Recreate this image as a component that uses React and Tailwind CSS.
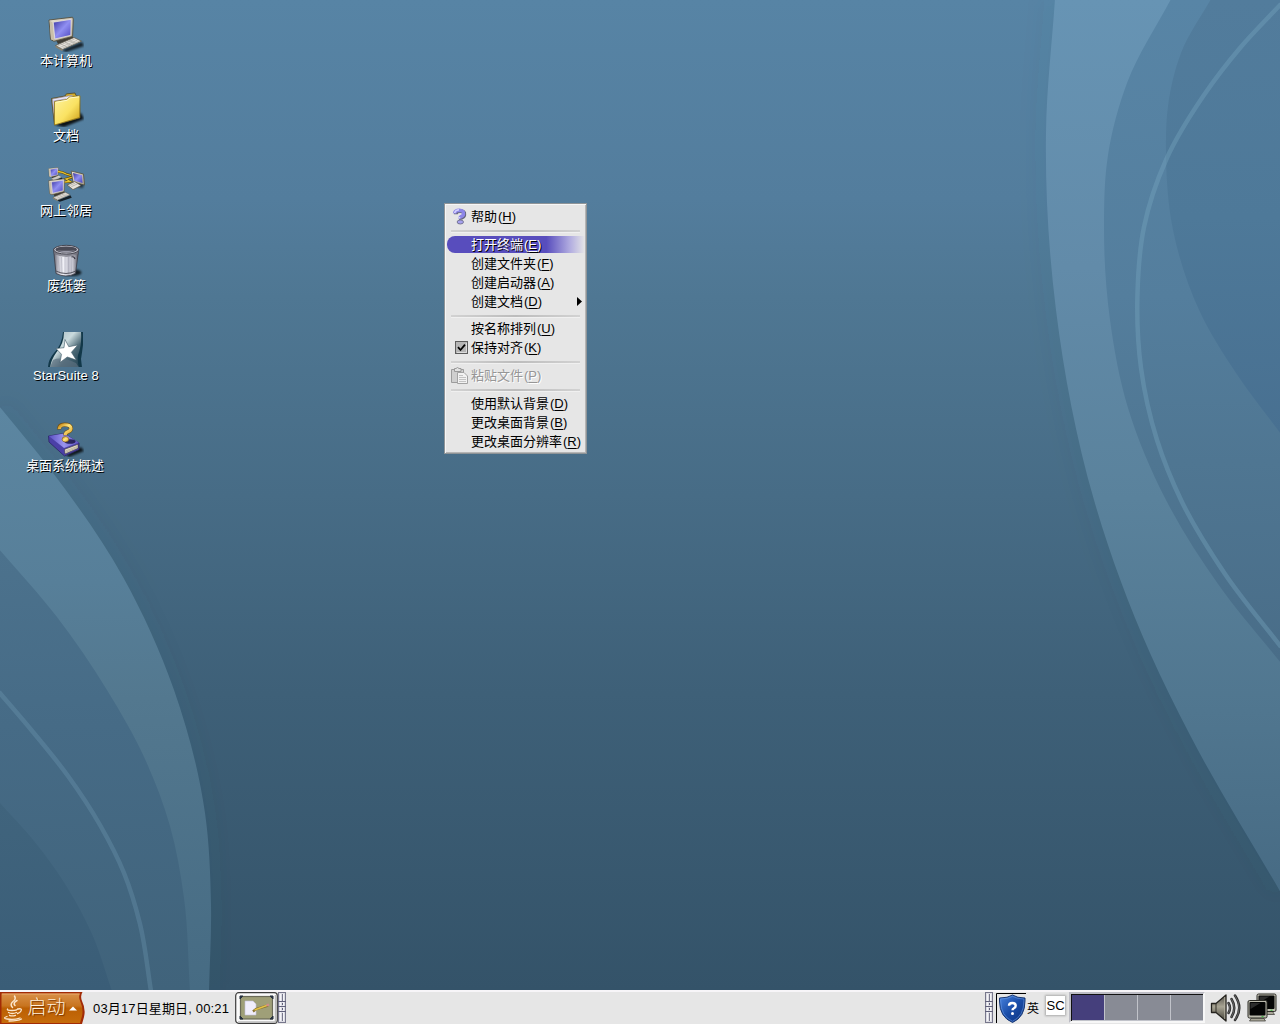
import React from "react";

// Smooth curve through points, with tangents weighted by chord length.
const smooth = (p) => {
  const n = p.length;
  const h = [];
  const v = [];
  for (let i = 0; i < n - 1; i++) {
    const dx = p[i + 1][0] - p[i][0];
    const dy = p[i + 1][1] - p[i][1];
    h[i] = Math.hypot(dx, dy);
    v[i] = [dx / h[i], dy / h[i]];
  }
  const m = p.map((_, i) => {
    if (i === 0) return v[0];
    if (i === n - 1) return v[n - 2];
    const s = h[i - 1] + h[i];
    return [0, 1].map((k) => (v[i - 1][k] * h[i] + v[i][k] * h[i - 1]) / s);
  });
  let d = `M${p[0][0]} ${p[0][1]}`;
  for (let i = 0; i < n - 1; i++) {
    const t = h[i] / 3;
    const b = p[i];
    const c = p[i + 1];
    d += `C${b[0] + m[i][0] * t} ${b[1] + m[i][1] * t} ${c[0] - m[i + 1][0] * t} ${c[1] - m[i + 1][1] * t} ${c[0]} ${c[1]}`;
  }
  return d;
};

const rOuter = [[1055, -1], [1046, 133], [1056, 310], [1094, 500], [1150, 653], [1190, 735], [1281, 893]];
const rMid = [[1171, -1], [1127, 83], [1108, 155], [1104, 227], [1110, 320], [1128, 408], [1166, 500], [1218, 584], [1281, 663]];
const rInner = [[1211, -1], [1181, 53], [1168, 106], [1166, 155], [1173, 230], [1200, 312], [1236, 373], [1281, 434]];
const rLine = [[1281, 4], [1240, 48], [1204, 95], [1166, 160], [1144, 227], [1137.5, 293], [1141, 368], [1157, 440], [1181, 500], [1225, 574], [1281, 647]];
const lOuter = [[-1, 406], [50, 469], [123, 577], [174, 690], [205, 813], [211, 905], [209, 991]];
const lMid = [[-1, 549], [57, 617], [107, 690], [145, 759], [170, 826], [184, 898], [190, 991]];
const lInner = [[-1, 802], [34, 841], [67, 887], [92, 934], [112, 991]];
const lLine = [[-1, 692], [33, 732], [68, 776], [100, 825], [124, 873], [140, 924], [151, 991]];

const Grad = ({ id, y1, y2, stops }) => (
  <linearGradient id={id} gradientUnits="userSpaceOnUse" x1="0" x2="0" y1={y1} y2={y2}>
    {stops.map(([o, c]) => <stop key={o} offset={o} stopColor={c} />)}
  </linearGradient>
);

function Wallpaper() {
  return (
    <svg className="absolute inset-0" width="1280" height="990" viewBox="0 0 1280 990">
      <defs>
        <Grad id="bg" y1="0" y2="990" stops={[[0, "#5784a5"], [0.2, "#537d9d"], [0.3, "#4f7793"], [0.5, "#476c86"], [0.7, "#3e6078"], [1, "#345369"]]} />
        <Grad id="rb" y1="0" y2="890" stops={[[0, "#6794b4"], [0.3, "#628ba9"], [0.56, "#5a829c"], [0.8, "#50768f"], [1, "#476b84"]]} />
        <Grad id="rm" y1="0" y2="660" stops={[[0, "#5885a6"], [0.45, "#547e9d"], [0.7, "#4f7692"], [1, "#496d88"]]} />
        <Grad id="ri" y1="0" y2="433" stops={[[0, "#527c9c"], [0.5, "#4e7999"], [1, "#487091"]]} />
        <Grad id="lb" y1="407" y2="990" stops={[[0, "#5c86a1"], [0.3, "#577f99"], [0.5, "#53788f"], [1, "#466b83"]]} />
        <Grad id="lm" y1="550" y2="990" stops={[[0, "#4c728d"], [0.4, "#466b86"], [1, "#40637b"]]} />
        <Grad id="li" y1="803" y2="990" stops={[[0, "#40647d"], [1, "#3a5d77"]]} />
        <filter id="soft" x="-20%" y="-20%" width="140%" height="140%"><feGaussianBlur stdDeviation="10" /></filter>
      </defs>
      <rect width="1280" height="990" fill="url(#bg)" />
      <path d={smooth(rOuter)} fill="none" stroke="#24475d" strokeOpacity=".035" strokeWidth="22" filter="url(#soft)" />
      <path d={smooth(lOuter)} fill="none" stroke="#24475d" strokeOpacity=".035" strokeWidth="22" filter="url(#soft)" />
      <path d={smooth(rOuter) + "V-1Z"} fill="url(#rb)" />
      <path d={smooth(rMid) + "V-1Z"} fill="url(#rm)" />
      <path d={smooth(rInner) + "V-1Z"} fill="url(#ri)" />
      <path d={smooth(rLine)} fill="none" stroke="#79a9c2" strokeOpacity=".36" strokeWidth="4.5" />
      <path d={smooth(lOuter) + "H-1Z"} fill="url(#lb)" />
      <path d={smooth(lMid) + "H-1Z"} fill="url(#lm)" />
      <path d={smooth(lInner) + "H-1Z"} fill="url(#li)" />
      <path d={smooth(lLine)} fill="none" stroke="#79a5be" strokeOpacity=".28" strokeWidth="4.5" />
    </svg>
  );
}

const IconDefs = () => (
  <svg className="absolute" width="0" height="0">
    <defs>
      <linearGradient id="scr" x1="0" y1="0" x2="1" y2="1"><stop offset="0" stopColor="#3a35a0" /><stop offset=".5" stopColor="#908ff2" /><stop offset="1" stopColor="#4b45bd" /></linearGradient>
      <linearGradient id="bezel" x1="0" y1="0" x2="1" y2="1"><stop offset="0" stopColor="#ece5d6" /><stop offset="1" stopColor="#a79e8b" /></linearGradient>
      <linearGradient id="fold" x1="0" y1="0" x2="1" y2="1"><stop offset="0" stopColor="#fdf3a0" /><stop offset=".55" stopColor="#fae262" /><stop offset="1" stopColor="#c99a12" /></linearGradient>
      <linearGradient id="metal" x1="0" x2="1"><stop offset="0" stopColor="#5d5d69" /><stop offset=".2" stopColor="#c4c4ce" /><stop offset=".4" stopColor="#f2f2f8" /><stop offset=".6" stopColor="#bfbfcb" /><stop offset=".75" stopColor="#ccccd6" /><stop offset="1" stopColor="#4b4b57" /></linearGradient>
      <linearGradient id="star" x1="0" x2="1" y2="1"><stop offset="0" stopColor="#9fb4bd" /><stop offset=".4" stopColor="#c9dadd" /><stop offset=".65" stopColor="#4b6875" /><stop offset="1" stopColor="#1f3f50" /></linearGradient>
      <linearGradient id="gold" x1="0" x2="1" y2="1"><stop offset="0" stopColor="#c98a14" /><stop offset=".45" stopColor="#ffe680" /><stop offset="1" stopColor="#dda52c" /></linearGradient>
      <linearGradient id="book" x1="0" x2="1"><stop offset="0" stopColor="#5a4fc4" /><stop offset=".5" stopColor="#9a94ee" /><stop offset="1" stopColor="#5b51bc" /></linearGradient>
      <linearGradient id="shield" x1="0" y1="0" x2="1" y2="1"><stop offset="0" stopColor="#4a85e0" /><stop offset=".5" stopColor="#1a4da8" /><stop offset="1" stopColor="#0c317c" /></linearGradient>
      <linearGradient id="spk" x1="0" y1="0" x2="0" y2="1"><stop offset="0" stopColor="#55524a" /><stop offset=".45" stopColor="#a8a493" /><stop offset="1" stopColor="#403e35" /></linearGradient>
      <filter id="sh" x="-30%" y="-30%" width="160%" height="160%"><feGaussianBlur stdDeviation="1.2" /></filter>
    </defs>
  </svg>
);

const Pc = () => (
  <>
    <path d="M14 34L34 26L36 30L18 36Z" fill="#000" opacity=".75" filter="url(#sh)" />
    <path d="M7 22L23 19L27 23L10 28Z" fill="#3f3c35" />
    <path d="M1 4L24.5 1.2L25.3 3L24.6 20.500L6 25.300L2.500 23.500Z" fill="url(#bezel)" stroke="#55503f" strokeWidth=".9" />
    <path d="M1.8 4.700L4.500 6.300L6 24.500L3 23.200Z" fill="#c9bfa9" />
    <path d="M5.300 6.200L23.200 3.300L22.800 19.300L6.800 23Z" fill="url(#scr)" stroke="#f2eee2" strokeWidth=".7" />
    <path d="M7.500 29.500L26 21.500L33.500 25.200L14.500 33.500Z" fill="#e9e5de" stroke="#5f5a4c" strokeWidth=".8" />
    <path d="M9.500 30L26.500 23.200M12 31.400L29.400 24.200M13.500 32.600L31.800 25M13 28L18.500 30.800M17 26.300L22.500 29M21 24.600L27 27" stroke="#a5a19a" strokeWidth=".6" />
    <path d="M7.500 29.700V31.300L14.500 35.200V33.600Z" fill="#8d826c" />
  </>
);
const Computer = () => <svg width="36" height="36" viewBox="0 0 36 36"><Pc /></svg>;
const Folder = () => (
  <svg width="36" height="36" viewBox="0 0 36 36">
    <path d="M7 34L33 22L36 28L16 36Z" fill="#000" opacity=".85" filter="url(#sh)" />
    <path d="M3.5 7.5L17 5L18.500 2.800L27 2L28 4.500L31.500 6L32 27L6.500 34Z" fill="#cfab2c" stroke="#4c4525" strokeWidth=".8" />
    <path d="M4.3 8L24 4.300L27 8L7 32Z" fill="#ece9f7" stroke="#827d9b" strokeWidth=".6" />
    <path d="M5.300 9.500L20 7L7 12L6.500 31Z" fill="#b4afd2" />
    <path d="M6.500 10.500L18.500 8.500L21.500 6L32 4.800L31.700 26.500L6.500 34Z" fill="url(#fold)" stroke="#8f7519" strokeWidth=".8" />
    <path d="M7.500 11.300L19 9.300L22 6.900L31 5.800" fill="none" stroke="#fffbc9" strokeWidth="1" />
  </svg>
);
const Network = () => (
  <svg width="38" height="36" viewBox="0 0 38 36">
    <g transform="translate(1.2 1) scale(.4)"><Pc /></g>
    <path d="M11 5.500Q16 6 19 8L24 9.500M17 16L23 15.500L19 13L26 11" fill="none" stroke="#5f4b0d" strokeWidth="2.4" />
    <path d="M11 5.500Q16 6 19 8L24 9.500M17 16L23 15.500L19 13L26 11" fill="none" stroke="#e8c22c" strokeWidth="1.3" />
    <path d="M24 20L36 22L37 17L30 17Z" fill="#000" opacity=".6" filter="url(#sh)" />
    <g transform="translate(22.500 4.500) scale(.58)">
      <path d="M3 1L24 6L26 25L6 20Z" fill="url(#bezel)" stroke="#55503f" strokeWidth="1.4" />
      <path d="M6 4.200L21.500 8.200L22.500 21.500L8.500 17.800Z" fill="url(#scr)" />
      <path d="M-4 25L9 19L20 26L6 33Z" fill="#e8e4dc" stroke="#57513f" strokeWidth="1.3" />
      <path d="M0 26L10 21.500M3 28L14 23" stroke="#99958e" />
    </g>
    <g transform="translate(1 12) scale(.66)"><Pc /></g>
  </svg>
);
const Trash = () => (
  <svg width="36" height="36" viewBox="0 0 36 36">
    <ellipse cx="24" cy="31.500" rx="9.500" ry="3.600" fill="#000" opacity=".75" filter="url(#sh)" />
    <path d="M5.500 8L8 32.500Q18 37.500 27.500 32.500L30.800 8Z" fill="url(#metal)" stroke="#3c3c46" strokeWidth=".8" />
    <path d="M10 15L11.500 32M13.500 16L14 33M17 16V33.500M20.500 16V33M24 15L23.500 32" stroke="#a3a3b1" strokeWidth=".5" />
    <path d="M7.900 30Q18 35 27.900 30" fill="none" stroke="#55555f" strokeWidth="1" />
    <path d="M5.800 10Q18 16.500 30.500 10L30 13Q18 19 6.300 13Z" fill="#70707c" opacity=".7" />
    <ellipse cx="18.200" cy="8.700" rx="12.500" ry="4.400" fill="#c4c4cf" stroke="#3a3a44" strokeWidth=".9" />
    <ellipse cx="18.200" cy="8.500" rx="10.800" ry="3.100" fill="#4a4a55" />
    <path d="M9 9.500Q18 13 27.500 9.500Q18 10 9 9.500" fill="#9a9aa8" />
    <path d="M23.500 16Q26 15 27 18" fill="none" stroke="#353541" strokeWidth="1.200" />
  </svg>
);
const StarSuite = () => (
  <svg width="36" height="36" viewBox="0 0 36 36">
    <path d="M15 1H35V14Q34 22 33 28L34 36.5H0Q0 29 6 22Q14 14 15 1Z" fill="#123849" />
    <path d="M16 1H33Q34 14 30 24Q29 30 31 36.5H2Q3 29 8 22Q16 13 16 1Z" fill="url(#star)" />
    <path d="M5 29Q13 25 28 32L31 36.5H2Z" fill="#5c7180" opacity=".7" />
    <path d="M17 8.500L20.800 15.700L29.800 14L23.400 21.300L28.300 29L19.300 26L12 31.500L13.500 23.300L8 17.500L16 16.700Z" fill="#fff" stroke="#405b68" strokeWidth=".6" />
  </svg>
);
const HelpBook = () => (
  <svg width="36" height="36" viewBox="0 0 36 36">
    <path d="M18 34L33 26L36 30L21 36Z" fill="#000" opacity=".8" filter="url(#sh)" />
    <path d="M.5 15L16 12.5L31 22V28.5L16.5 35L1 21Z" fill="#4b40a7" stroke="#2c2566" strokeWidth=".8" />
    <path d="M.8 15L16 12.5L31 21.5L16 27Z" fill="url(#book)" />
    <path d="M16.6 28.3L30 23.3V27.3L17 33Z" fill="#e6dfca" stroke="#3e3b42" strokeWidth=".6" />
    <path d="M18 29.8L29 25.5M18 31.2L29 26.6" stroke="#958c77" strokeWidth=".5" />
    <ellipse cx="22" cy="20.500" rx="5.500" ry="2.300" fill="#15123d" opacity=".8" />
    <path d="M11 8.500Q11 3.900 16.500 3.700Q23 3.600 23 7.500Q23 9.800 19.500 11Q17.300 11.800 17.400 14.300" fill="none" stroke="#705018" strokeWidth="4.2" />
    <path d="M11.200 8Q11.500 3.900 16.500 3.700Q23 3.600 23 7.500Q23 9.800 19.500 11Q17.300 11.800 17.400 14" fill="none" stroke="url(#gold)" strokeWidth="3.1" />
    <ellipse cx="17.400" cy="18.300" rx="3.300" ry="2.700" fill="url(#gold)" stroke="#705018" strokeWidth=".6" />
  </svg>
);

const ITEMS = [
  ["本计算机", Computer, "h-[75px]", ""],
  ["文档", Folder, "h-[75px]", ""],
  ["网上邻居", Network, "h-[75px]", ""],
  ["废纸篓", Trash, "h-[90px]", "ml-px"],
  ["StarSuite 8", StarSuite, "h-[90px]", "tracking-[0.15px]"],
  ["桌面系统概述", HelpBook, "h-[75px]", "mr-[2px]"],
];

const Row = ({ label, k, icon, active, disabled, arrow }) => (
  <div
    className={
      "flex h-[19px] items-center whitespace-nowrap " +
      (active ? "text-white [text-shadow:1px_1px_0_#000]" : disabled ? "text-[#969696] [text-shadow:1px_1px_0_#fff]" : "text-black")
    }
  >
    <div
      className={
        "ml-px flex h-[17px] w-[138px] items-center rounded-l-[8px] " +
        (active ? "bg-[linear-gradient(90deg,#584dbd_0%,#584dbd_72%,#b1ace0_89%,#e6e6e6_100%)]" : "")
      }
    >
      <span className="flex w-[24px] shrink-0 justify-center">{icon}</span>
      <span>{label}</span>
      <span className="ml-px">(<span className="underline decoration-1 underline-offset-[2px]">{k}</span>)</span>
      {arrow && <svg className="ml-auto mr-[3px]" width="5" height="9" viewBox="0 0 5 9"><path d="M0 0L5 4.5L0 9Z" fill="#000" /></svg>}
    </div>
  </div>
);
const Sep = ({ short }) => (
  <div className={(short ? "h-[8px]" : "h-[9px]") + " pl-[5px] pt-[4px]"}>
    <div className="h-[3px] w-[129px] border-b border-[#f0f0f0] bg-[linear-gradient(90deg,#d2d2d2,#bcbcbc_50%,#d2d2d2)]" />
  </div>
);

const HelpIcon = () => (
  <svg width="15" height="17" viewBox="0 0 15 17">
    <path d="M3 5.5Q3 2.5 7.3 2.5Q12 2.5 11.5 6Q11.3 8 8.8 8.7Q8 9 8.2 11" fill="none" stroke="#66667c" strokeWidth="3.8" transform="translate(.8 .7)" />
    <path d="M2.5 5.5Q3 2.3 7.3 2.3Q12 2.5 11.5 6Q11.3 8 8.8 8.7Q8 9 8.2 10.8" fill="none" stroke="#8d86e8" strokeWidth="3.4" />
    <path d="M2.500 5Q3.500 2 7 1.800M7.500 9V10.500" fill="none" stroke="#d5d2ff" strokeWidth="1.500" />
    <ellipse cx="8.300" cy="14" rx="3.200" ry="2" fill="#a7a2ee" stroke="#66667c" strokeWidth=".8" />
  </svg>
);
const Check = () => (
  <svg className="ml-[4px]" width="13" height="13" viewBox="0 0 13 13">
    <rect x=".5" y=".5" width="12" height="12" fill="#b5b5b5" stroke="#5c5c5c" />
    <path d="M2 11.500H11.500V2" fill="none" stroke="#dcdcdc" />
    <path d="M3 6.200L5.500 9L10 3.700" fill="none" stroke="#000" strokeWidth="1.800" />
  </svg>
);
const Paste = () => (
  <svg width="17" height="17" viewBox="0 0 17 17">
    <path d="M.5 2.5H12.5V15.5H.5Z" fill="#cfcfcf" stroke="#9c9c9c" />
    <path d="M3.5 1.5H5Q6.5 -.5 8 1.5H10V4.5H3.5Z" fill="#e2e2e2" stroke="#999" />
    <path d="M6.5 5.5H13L16.5 9V16.5H6.5Z" fill="#f2f2f2" stroke="#a3a3a3" />
    <path d="M8 8.5H12M8 10.5H15M8 12.5H15M8 14.5H15" stroke="#c3c3c3" />
  </svg>
);

const Menu = () => (
  <div className="absolute left-[444px] top-[203px] h-[251px] w-[143px] border border-[#8f9497] bg-[#e6e6e6] pl-px pt-[3px] text-[13px] leading-[17px] shadow-[inset_1px_1px_0_#f6f6f6,inset_-1px_-1px_0_#b5b5b5]">
    <Row label="帮助" k="H" icon={<HelpIcon />} />
    <Sep />
    <Row label="打开终端" k="E" active />
    <Row label="创建文件夹" k="F" />
    <Row label="创建启动器" k="A" />
    <Row label="创建文档" k="D" arrow />
    <Sep short />
    <Row label="按名称排列" k="U" />
    <Row label="保持对齐" k="K" icon={<Check />} />
    <Sep />
    <Row label="粘贴文件" k="P" disabled icon={<Paste />} />
    <Sep />
    <Row label="使用默认背景" k="D" />
    <Row label="更改桌面背景" k="B" />
    <Row label="更改桌面分辨率" k="R" />
  </div>
);

const Handle = () => (
  <svg className="-mt-px shrink-0" width="8" height="31" viewBox="0 0 8 31">
    <rect x=".5" y=".5" width="7" height="30" fill="#dcdce3" stroke="#77778c" />
    <path d="M2.5 2V29M5.5 2V29" stroke="#f4f4f8" />
    <path d="M4.5 2V9M4.5 21V29" stroke="#77778c" />
    <path d="M0 9.5H8M0 14.5H8M0 19.5H8M4.5 11V13M4.5 16V18" stroke="#60607a" />
  </svg>
);

const Start = () => (
  <div className="relative flex h-[32px] w-[86px] shrink-0 items-center">
    <svg className="absolute inset-0" width="86" height="32" viewBox="0 0 86 32">
      <defs>
        <linearGradient id="or" x1="0" y1="0" x2="0" y2="1"><stop offset="0" stopColor="#d89048" /><stop offset=".42" stopColor="#c8741f" /><stop offset=".5" stopColor="#bb5f03" /><stop offset="1" stopColor="#c66c0b" /></linearGradient>
      </defs>
      <path d="M0 0H82.500Q80 4 82 9Q86 17 84 25L82 32H0Z" fill="#a22b06" />
      <path d="M1.500 1.500H80Q78 5 80.500 10Q83.500 17 82 24L80 31H1.500Z" fill="url(#or)" />
      <path d="M2 2H79.500" stroke="#f0b780" opacity=".7" />
      <g fill="none" stroke="#fbe6cc" strokeLinecap="round">
        <path d="M14.500 4Q16.500 7 13 9.500Q9.500 12.500 12.500 15.500M17 8.500Q12.500 11 15 13.500" strokeWidth="1.500" />
        <path d="M7.500 17Q6.500 18.500 12 18.500Q17 18.500 17.500 17M8.500 20.500Q12 22.500 16.500 20.500M9.500 23.300Q12 24.600 15.500 23.300" strokeWidth="1.300" />
        <path d="M18 17Q22.500 16 21 19Q20 21 17.500 21.500" strokeWidth="1.300" />
        <path d="M7 24.500Q2 26 7 27Q14 28.300 20 26M9 29Q18 29 21.500 27" strokeWidth="1.300" />
      </g>
      <path d="M69 18.500L73 14.500L77 18.500Z" fill="#fff" />
    </svg>
    <span className="relative ml-[27.5px] text-[19px] font-light leading-[28px] text-[#fff0dc] [text-shadow:1px_1px_1px_#7a3500]">启动</span>
  </div>
);

const ShowDesktop = () => (
  <svg className="shrink-0" width="43" height="32" viewBox="0 0 43 32">
    <rect x=".7" y=".7" width="41.600" height="30.600" rx="3" fill="#fafafa" stroke="#3c3c3c" strokeWidth="1.200" />
    <path d="M3 30H40.500V3" fill="none" stroke="#bcbcbc" strokeWidth="1.500" />
    <rect x="5.500" y="4.500" width="32" height="22.500" fill="#9f9f78" stroke="#6a6a58" strokeWidth="1.200" />
    <path d="M5 7V4H8L5 7M35 4H38V7L35 4M38 24V27H35L38 24M8 27H5V24L8 27" fill="#26303f" stroke="#26303f" strokeWidth="1" />
    <path d="M10 9H18L21 12V23H10Z" fill="#f0edfb" stroke="#c4c0d8" strokeWidth=".6" />
    <path d="M18 19.500L21 17L33 13.500" stroke="#857030" strokeWidth="2.400" fill="none" />
    <path d="M19.500 18L33 13" stroke="#e3c147" strokeWidth="1.500" />
    <path d="M31.500 13.500L34 12.500" stroke="#d28a8a" strokeWidth="2.200" />
  </svg>
);

const Shield = () => (
  <svg className="shrink-0" width="31" height="32" viewBox="0 0 31 32">
    <path d="M.5 31V1.500H30" fill="none" stroke="#000" />
    <path d="M16.500 3Q21 6 29 6V9Q29 25 16.500 30.500Q3.500 25 3.500 9V6Q12 6 16.500 3Z" fill="url(#shield)" stroke="#173774" strokeWidth="1" />
    <path d="M16.500 4.300Q21 7 27.900 7V9Q27.900 24 16.500 29.300Q4.700 24 4.700 9V7Q12 7 16.500 4.300Z" fill="none" stroke="#78a7ef" strokeWidth=".8" opacity=".6" />
    <path d="M13 13.800Q13 11 16.300 11Q19.700 11 19.700 13.700Q19.700 15.300 17.900 16.200Q16.500 16.900 16.500 18.300" fill="none" stroke="#fff" strokeWidth="2.400" />
    <circle cx="16.500" cy="21.400" r="1.500" fill="#fff" />
  </svg>
);

const Speaker = () => (
  <svg className="shrink-0" width="32" height="30" viewBox="0 0 32 30">
    <path d="M1.500 10.500H6L16 2V28L6 19.500H1.500Z" fill="url(#spk)" stroke="#24231e" strokeWidth="1.300" strokeLinejoin="round" />
    <path d="M6 10.500V19.500" stroke="#34322a" />
    <path d="M14.700 4V26" stroke="#b9b5a4" strokeWidth=".8" />
    <g fill="none" strokeLinecap="round">
      <path d="M18.500 10Q21.500 15 18.500 20M21.500 6Q27 15 21.500 24M25 2.500Q33.500 15 25 27" stroke="#2b2b2b" strokeWidth="2.500" />
      <path d="M18.500 10Q21.500 15 18.500 20M21.500 6Q27 15 21.500 24M25 2.500Q33.500 15 25 27" stroke="#7d7d7d" strokeWidth=".7" />
    </g>
  </svg>
);
const Crt = () => (
  <>
    <path d="M4 18H16L18 21H2Z" fill="#a9a698" stroke="#35342f" strokeWidth=".7" />
    <rect x=".5" y=".5" width="19" height="17.500" rx="1.500" fill="#bdbbae" stroke="#2b2a25" />
    <rect x="2" y="2" width="16" height="13.500" rx="1" fill="#050505" />
    <path d="M3 3H13L3 9Z" fill="#2c2c2c" />
    <path d="M14 16.700H16" stroke="#29b934" />
  </>
);
const Monitors = () => (
  <svg className="shrink-0" width="31" height="30" viewBox="0 0 31 30">
    <g transform="translate(9.500 .5)"><Crt /></g>
    <g transform="translate(.5 7)"><Crt /></g>
  </svg>
);

export default function App() {
  return (
    <div className="relative flex h-[1024px] w-[1280px] flex-col overflow-hidden font-['Liberation_Sans','Noto_Sans_CJK_SC',sans-serif]">
      <IconDefs />
      <Wallpaper />
      <main className="relative h-[990px] pt-[16px]">
        <div className="flex w-[132px] flex-col">
          {ITEMS.map(([label, Icon, h, extra]) => (
            <div key={label} className={"flex flex-col items-center " + h}>
              <div className="flex h-[37px] justify-center"><Icon /></div>
              <div className={"whitespace-nowrap text-[13px] leading-[16px] text-white [text-shadow:1px_1px_0_#000] " + extra}>{label}</div>
            </div>
          ))}
        </div>
        <Menu />
      </main>
      <footer className="relative flex h-[34px] items-center border-t-2 border-[#f7f5f8] bg-[#e6e6e6] text-[13px] text-black">
        <Start />
        <span className="ml-[7px] mt-px w-[142px] shrink-0 whitespace-nowrap tracking-[0.15px]">03月17日星期日, 00:21</span>
        <ShowDesktop />
        <Handle />
        <div className="ml-auto flex items-center">
          <Handle />
          <div className="ml-[3px]"><Shield /></div>
          <span className="mt-px text-[12px]">英</span>
          <span className="mb-[5px] ml-[7px] flex h-[19px] w-[19px] items-center justify-center bg-white text-[13px] shadow-[0_0_2px_1px_#aaa]">SC</span>
          <div className="mb-px ml-[4px] flex h-[31px] w-[136px] gap-px border-2 border-b-[#f7f7f7] border-l-[#bcbcc4] border-r-[#f7f7f7] border-t-[#bcbcc4] bg-[#c1c3ca] pb-px pl-px pt-px shadow-[inset_1px_1px_0_#111]">
            <div className="flex-1 bg-[#453f7c]" />
            <div className="flex-1 bg-[#888b95]" />
            <div className="flex-1 bg-[#888b95]" />
            <div className="flex-1 bg-[#888b95]" />
          </div>
          <div className="ml-[5px]"><Speaker /></div>
          <div className="ml-[5px] mr-[2px]"><Monitors /></div>
        </div>
      </footer>
    </div>
  );
}
